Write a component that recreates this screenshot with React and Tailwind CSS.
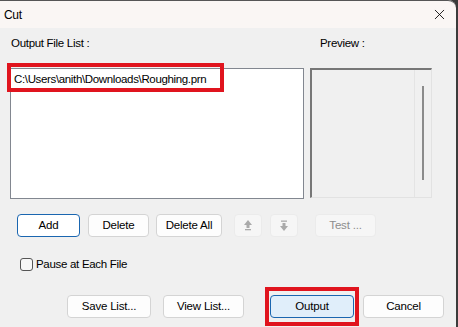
import { X } from 'lucide-react';

const font = { fontFamily: '"Liberation Sans", Arial, sans-serif' };

const Btn = ({ children, className = '' }) => (
  <button
    className={`h-[23px] rounded-[4px] border text-[11.5px] tracking-[-0.2px] flex items-center justify-center ${className}`}
  >
    {children}
  </button>
);

const App = () => {
  return (
    <div className="w-[458px] h-[327px] bg-[#3b3b3b] overflow-hidden" style={font}>
      <div className="w-[456px] h-[327px] bg-[#f0f0f0] rounded-tr-[8px] flex flex-col text-[#000] text-[11.5px] tracking-[-0.3px]">
        {/* Title bar */}
        <div className="h-[28px] bg-[#faf6f4] rounded-tr-[8px] flex items-center justify-between pl-[4px] pr-[8px] border-t border-[#555]">
          <span className="text-[12px]">Cut</span>
          <X className="w-[17px] h-[17px]" strokeWidth={1.2} />
        </div>

        <div className="flex-1 flex flex-col pl-[10px]">
          {/* Labels */}
          <div className="flex mt-[9px] h-[14px] items-center">
            <span className="ml-[1px] w-[309px]">Output File List :</span>
            <span>Preview :</span>
          </div>

          {/* List + preview */}
          <div className="flex mt-[17px] gap-[6px]">
            <div className="relative w-[294px] h-[131px] bg-white border border-[#828790]">
              <div className="pl-[3px] pt-[2px] tracking-[-0.35px]">
                C:\Users\anith\Downloads\Roughing.prn
              </div>
              <div className="absolute left-[-4px] top-[-6px] w-[217px] h-[29px] border-[4px] border-[#e0141e]" />
            </div>
            <div className="w-[122px] h-[130px] border-t-2 border-l-2 border-[#777] border-r border-b border-r-[#e2e2e2] border-b-[#e2e2e2] flex">
              <div className="flex-1" />
              <div className="w-[17px] border-l border-[#e4e4e4] flex justify-center pt-[16px]">
                <div className="w-[2px] h-[94px] bg-[#8b8b8b]" />
              </div>
            </div>
          </div>

          {/* Buttons */}
          <div className="flex items-center mt-[15px] ml-[7px]">
            <Btn className="w-[63px] bg-white border-[#1a66b0] border-[1.5px]">Add</Btn>
            <Btn className="w-[61px] ml-[8px] bg-[#fdfdfd] border-[#d4d4d4]">Delete</Btn>
            <Btn className="w-[66px] ml-[7px] bg-[#fdfdfd] border-[#d4d4d4]">Delete All</Btn>
            <Btn className="w-[28px] ml-[12px] bg-[#f6f6f6] border-[#ebebeb] text-[#a8a8a8]">
              <svg width="8" height="11" viewBox="0 0 8 11" fill="#aaa">
                <path d="M4 0 L8 5 H5.5 V8 H2.5 V5 H0 Z" />
                <rect x="1" y="9" width="6" height="1.3" />
              </svg>
            </Btn>
            <Btn className="w-[28px] ml-[8px] bg-[#f6f6f6] border-[#ebebeb] text-[#a8a8a8]">
              <svg width="8" height="11" viewBox="0 0 8 11" fill="#aaa">
                <rect x="1" y="0.5" width="6" height="1.3" />
                <path d="M2.5 3 H5.5 V6 H8 L4 11 L0 6 H2.5 Z" />
              </svg>
            </Btn>
            <Btn className="w-[61px] ml-[17px] bg-[#f6f6f6] border-[#ebebeb] text-[#8d8d8d]">Test ...</Btn>
          </div>

          {/* Checkbox */}
          <div className="flex items-center mt-[19px] ml-[10px]">
            <div className="w-[13px] h-[13px] rounded-[3px] border border-[#555] bg-[#f7f7f7]" />
            <span className="ml-[3px]">Pause at Each File</span>
          </div>

          {/* Bottom row */}
          <div className="flex items-center mt-[14px] ml-[57px]">
            <Btn className="w-[84px] bg-[#fdfdfd] border-[#d4d4d4]">Save List...</Btn>
            <Btn className="w-[81px] ml-[12px] bg-[#fdfdfd] border-[#d4d4d4]">View List...</Btn>
            <div className="ml-[21px] border-[4px] border-[#e0141e] px-[1px] py-[4px]">
              <Btn className="w-[84px] bg-[#e0eefa] border-[#1a66b0] border-[1.5px]">Output</Btn>
            </div>
            <Btn className="w-[81px] ml-[4px] bg-[#fdfdfd] border-[#d4d4d4]">Cancel</Btn>
          </div>
        </div>
      </div>
    </div>
  );
};

export default App;
